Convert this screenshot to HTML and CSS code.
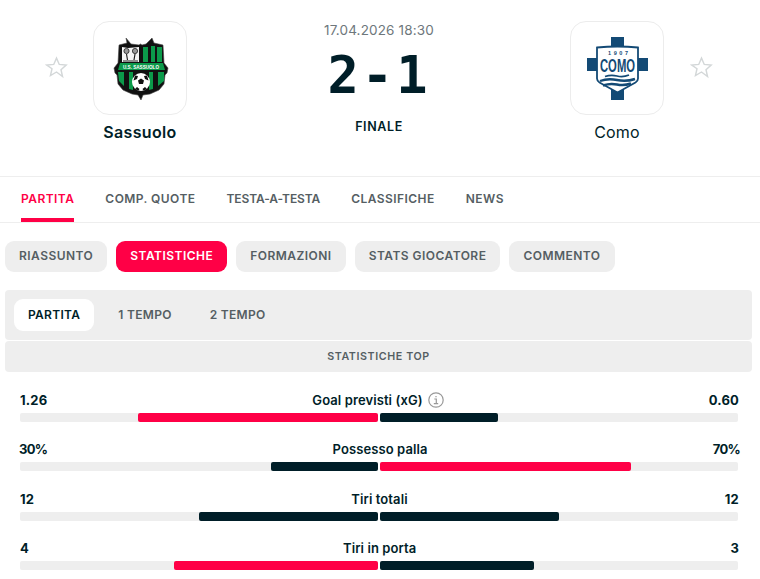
FILE: index.html
```html
<!DOCTYPE html>
<html lang="it">
<head>
<meta charset="utf-8">
<title>Sassuolo - Como</title>
<link rel="stylesheet" href="styles.css">
</head>
<body>
<header class="match">
  <div class="team team-home">
    <svg class="star" viewBox="0 0 24 24"><path d="M12 2.2l2.9 6.6 7.2.7-5.4 4.8 1.6 7.1L12 16.7l-6.3 3.7 1.6-7.1L1.9 9.500l7.2-.7z"/></svg>
    <div class="club">
      <div class="logo">
        <svg viewBox="0 0 94 94" width="94" height="94">
          <path fill="#111" stroke="#444" stroke-width=".6" d="M33 17l5 6 8 1 1.500-1 1.500 1 4-1 6-6 2 5 9 2 1 18 4 5-1 5-2 2-1 9-5 6-9 4-7 1-2 5-3-5-6-1-9-4-5-6-1-9-2-2-1-5 4-5 1-18 8-2z"/>
          <path fill="#f6f6f6" d="M29 26l6 1 11-1v15H29z"/>
          <path fill="#0b9a4a" d="M50 26h5v15h-5zM58 25h4v16h-4zM64 26h5v15h-5z"/>
          <g stroke="#222" fill="none"><circle cx="33.500" cy="30" r="2.600" fill="#999" stroke-width=".8"/><circle cx="42" cy="30" r="2.600" fill="#999" stroke-width=".8"/><path stroke-width="1.200" d="M33.500 33l1 6M42 33l-1 6M30 40h15"/></g>
          <path fill="#0b9a4a" d="M27 42h43l2 7H25z"/>
          <text class="crest-text" x="48" y="47.500" textLength="36" lengthAdjust="spacingAndGlyphs">U.S. SASSUOLO</text>
          <path fill="#0b9a4a" d="M25 51h6v14l-5-5zM36 51h4v18l-4-1zM56 51h4v17l-4 1zM65 51h6v9l-6 5z"/>
          <circle cx="48" cy="61" r="9" fill="#fff"/>
          <path fill="#111" d="M48 57.500l3 2-1 3.500h-4l-1-3.500zM42 54.500l3 .5-1 3-3.500 1.500zM54 54.500l-3 .5 1 3 3.500 1.500zM44 66l2.500 2-1 1.500-3.500-1.500zM52 66l-2.500 2 1 1.500 3.500-1.500z"/>
        </svg>
      </div>
      <h2 class="name name-win">Sassuolo</h2>
    </div>
  </div>
  <div class="result">
    <p class="date">17.04.2026 18:30</p>
    <p class="score">2-1</p>
    <p class="status">FINALE</p>
  </div>
  <div class="team team-away">
    <div class="club">
      <div class="logo">
        <svg viewBox="0 0 94 94" width="94" height="94">
          <path fill="#134a75" d="M41 16h13v21h24v13H54v29H41V50H17V37h24z"/>
          <path fill="#fff" stroke="#134a75" stroke-width="1.800" d="M27 26.500q20.500-2 41 0v31q0 2.500-2.500 4L47.500 71.500l-18-10q-2.500-1.500-2.500-4z"/>
          <text class="como-year" x="48" y="33.500" textLength="20" lengthAdjust="spacing">1907</text>
          <text class="como-name" x="47.500" y="51" textLength="35" lengthAdjust="spacingAndGlyphs">COMO</text>
          <path fill="none" stroke="#134a75" stroke-width="1.800" d="M35 55.500q6-2 12-.5t12-1"/>
          <path fill="none" stroke="#134a75" stroke-width="2.400" d="M30 60q8-3 17-1t18-1"/>
          <path fill="none" stroke="#134a75" stroke-width="2.400" d="M33 64.500q7-2.500 14-1t14-1"/>
        </svg>
      </div>
      <h2 class="name">Como</h2>
    </div>
    <svg class="star star-away" viewBox="0 0 24 24"><path d="M12 2.2l2.9 6.6 7.2.7-5.4 4.8 1.6 7.1L12 16.7l-6.3 3.7 1.6-7.1L1.9 9.500l7.2-.7z"/></svg>
  </div>
</header>

<nav class="tabs">
  <a class="tab tab-on">PARTITA</a>
  <a class="tab">COMP. QUOTE</a>
  <a class="tab tab-tight">TESTA-A-TESTA</a>
  <a class="tab">CLASSIFICHE</a>
  <a class="tab">NEWS</a>
</nav>

<nav class="pills">
  <a class="pill">RIASSUNTO</a>
  <a class="pill pill-on">STATISTICHE</a>
  <a class="pill">FORMAZIONI</a>
  <a class="pill">STATS GIOCATORE</a>
  <a class="pill">COMMENTO</a>
</nav>

<section class="panel">
  <div class="periods">
    <a class="period period-on">PARTITA</a>
    <a class="period">1 TEMPO</a>
    <a class="period">2 TEMPO</a>
  </div>
  <h3 class="section-title">STATISTICHE TOP</h3>
</section>

<section class="stats">
  <div class="stat">
    <div class="stat-head"><span>1.26</span><span class="stat-label">Goal previsti (xG)
      <svg class="info" viewBox="0 0 16 16"><circle cx="8" cy="8" r="7.200"/><path d="M6.300 7h2v4.500M5.800 11.700h4.400M8 3.900v1.400"/></svg></span><span>0.60</span></div>
    <div class="bars">
      <div class="track track-left"><div class="fill red" style="width:67%"></div></div>
      <div class="track"><div class="fill dark" style="width:33%"></div></div>
    </div>
  </div>
  <div class="stat">
    <div class="stat-head"><span class="pct">30%</span><span class="stat-label">Possesso palla</span><span class="pct">70%</span></div>
    <div class="bars">
      <div class="track track-left"><div class="fill dark" style="width:30%"></div></div>
      <div class="track"><div class="fill red" style="width:70%"></div></div>
    </div>
  </div>
  <div class="stat">
    <div class="stat-head"><span>12</span><span class="stat-label">Tiri totali</span><span>12</span></div>
    <div class="bars">
      <div class="track track-left"><div class="fill dark" style="width:50%"></div></div>
      <div class="track"><div class="fill dark" style="width:50%"></div></div>
    </div>
  </div>
  <div class="stat">
    <div class="stat-head"><span>4</span><span class="stat-label">Tiri in porta</span><span>3</span></div>
    <div class="bars">
      <div class="track track-left"><div class="fill red" style="width:57%"></div></div>
      <div class="track"><div class="fill dark" style="width:43%"></div></div>
    </div>
  </div>
</section>
</body>
</html>
```
FILE: styles.css
```css
* { box-sizing: border-box; }
html, body { margin: 0; padding: 0; height: 579px; overflow: hidden; }
body { width: 760px; background: #fff; color: #001e28; font-family: Inter, "Liberation Sans", sans-serif; }
a { display: block; }
h2, h3, p { margin: 0; }

.match { display: flex; height: 177px; padding: 21px 48px 0 45px; border-bottom: 1px solid #eee; }
.team { display: flex; align-items: flex-start; gap: 25px; }
.team-away { gap: 26px; }
.star { width: 23px; height: 23px; margin-top: 35px; fill: none; stroke: #d3d7d8; stroke-width: 1.500; }
.star-away { margin-right: -1px; }
.club { display: flex; flex-direction: column; align-items: center; }
.logo { width: 94px; height: 94px; border: 1px solid #ececec; border-radius: 16px; overflow: hidden; }
.logo svg { display: block; margin: -1px; }
.name { margin-top: 7px; font-size: 16px; line-height: 20px; font-weight: 400; letter-spacing: .2px; }
.name-win { font-weight: 600; letter-spacing: .35px; }
.crest-text { font: 700 5px "Liberation Sans", sans-serif; fill: #fff; text-anchor: middle; }
.como-year { font: 700 5.500px "Liberation Sans", sans-serif; fill: #134a75; text-anchor: middle; }
.como-name { font: 700 18px "Liberation Sans", sans-serif; fill: #134a75; text-anchor: middle; }

.result { flex: 1; display: flex; flex-direction: column; align-items: center; padding-left: 1px; text-align: center; }
.date { margin-top: 1px; font-size: 13.500px; line-height: 16px; letter-spacing: .15px; color: #6e777c; }
.score { margin-top: 11px; font: 700 52px/52px "DejaVu Sans Mono", monospace; letter-spacing: 3px; color: #001e28; }
.status { margin-top: 18px; font-size: 12.500px; line-height: 16px; font-weight: 600; letter-spacing: .6px; }

.tabs { display: flex; gap: 31px; height: 46px; padding-left: 21px; border-bottom: 1px solid #eee; }
.tab { height: 45px; padding-top: 14px; font-size: 12px; line-height: 16px; font-weight: 600; letter-spacing: .45px; color: #555e63; }
.tab-tight { letter-spacing: -.1px; }
.tab-on { color: #ff0046; border-bottom: 4px solid #ff0046; border-radius: 2px 2px 0 0; }

.pills { display: flex; gap: 9px; padding: 18px 0 0 5px; }
.pill { height: 31px; padding: 0 14px; border-radius: 9px; background: #eee; font-size: 12px; line-height: 29px; font-weight: 600; letter-spacing: .47px; color: #555e63; }
.pill-on { background: #ff0046; color: #fff; }

.panel { margin: 18px 8px 0 5px; }
.periods { display: flex; gap: 10px; height: 50px; padding: 9px; border-radius: 4px; background: #eee; }
.period { height: 32px; padding: 0 14px; border-radius: 9px; font-size: 12px; line-height: 31px; font-weight: 600; letter-spacing: .3px; color: #555e63; }
.period-on { background: #fff; color: #001e28; }
.section-title { margin-top: 1px; height: 31px; border-radius: 4px; background: #eee; text-align: center; font-size: 10.700px; line-height: 31px; font-weight: 600; letter-spacing: .6px; color: #555e63; }

.stats { padding: 19px 22px 0 20px; }
.stat { height: 49.330px; }
.stat-head { display: flex; justify-content: space-between; align-items: center; height: 18px; margin-right: -1px; font-size: 13px; font-weight: 700; letter-spacing: .2px; }
.pct { letter-spacing: -.7px; margin: 0 -1px; }
.stat-label { display: flex; align-items: center; gap: 5px; font-weight: 600; letter-spacing: .1px; }
.info { width: 16px; height: 16px; fill: none; stroke: #999; stroke-width: 1.200; }
.bars { display: flex; gap: 2px; margin-top: 4px; }
.track { flex: 1; display: flex; height: 9px; border-radius: 2px; background: #eee; }
.track-left { justify-content: flex-end; }
.fill { height: 9px; border-radius: 2px; }
.red { background: #ff0046; }
.dark { background: #001e28; }
```
